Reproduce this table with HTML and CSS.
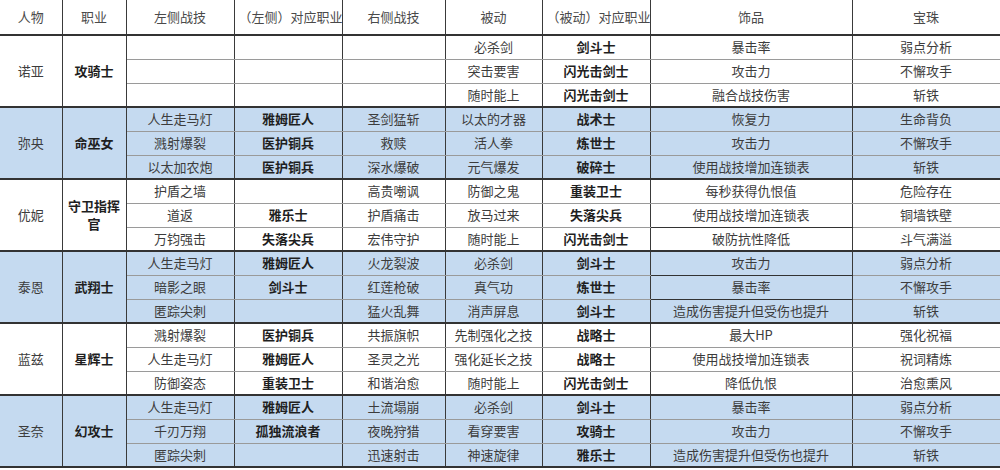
FILE: index.html
```html
<!DOCTYPE html>
<html lang="zh-CN">
<head>
<meta charset="utf-8">
<title>角色配置表</title>
<link rel="stylesheet" href="styles.css">
</head>
<body>
<table class="sheet">
  <colgroup>
    <col class="c1"><col class="c2"><col class="c3"><col class="c4"><col class="c5"><col class="c6"><col class="c7"><col class="c8"><col class="c9">
  </colgroup>
  <thead>
    <tr class="head">
      <th>人物</th><th>职业</th><th>左侧战技</th><th>（左侧）对应职业</th><th>右侧战技</th><th>被动</th><th>（被动）对应职业</th><th>饰品</th><th>宝珠</th>
    </tr>
  </thead>
  <tbody class="grp">
    <tr class="first"><td rowspan="3">诺亚</td><td rowspan="3" class="job">攻骑士</td><td></td><td class="b"></td><td></td><td>必杀剑</td><td class="b">剑斗士</td><td>暴击率</td><td>弱点分析</td></tr>
    <tr><td></td><td class="b"></td><td></td><td>突击要害</td><td class="b">闪光击剑士</td><td>攻击力</td><td>不懈攻手</td></tr>
    <tr><td></td><td class="b"></td><td></td><td>随时能上</td><td class="b">闪光击剑士</td><td>融合战技伤害</td><td>斩铁</td></tr>
  </tbody>
  <tbody class="grp blue">
    <tr class="first"><td rowspan="3">弥央</td><td rowspan="3" class="job">命巫女</td><td>人生走马灯</td><td class="b">雅姆匠人</td><td>圣剑猛斩</td><td>以太的才器</td><td class="b">战术士</td><td>恢复力</td><td>生命背负</td></tr>
    <tr><td>溅射爆裂</td><td class="b">医护铜兵</td><td>救赎</td><td>活人拳</td><td class="b">炼世士</td><td>攻击力</td><td>不懈攻手</td></tr>
    <tr><td>以太加农炮</td><td class="b">医护铜兵</td><td>深水爆破</td><td>元气爆发</td><td class="b">破碎士</td><td>使用战技增加连锁表</td><td>斩铁</td></tr>
  </tbody>
  <tbody class="grp">
    <tr class="first"><td rowspan="3">优妮</td><td rowspan="3" class="job">守卫指挥官</td><td>护盾之墙</td><td class="b"></td><td>高贵嘲讽</td><td>防御之鬼</td><td class="b">重装卫士</td><td>每秒获得仇恨值</td><td>危险存在</td></tr>
    <tr><td>道返</td><td class="b">雅乐士</td><td>护盾痛击</td><td>放马过来</td><td class="b">失落尖兵</td><td class="dk">使用战技增加连锁表</td><td>铜墙铁壁</td></tr>
    <tr><td>万钧强击</td><td class="b">失落尖兵</td><td>宏伟守护</td><td>随时能上</td><td class="b">闪光击剑士</td><td>破防抗性降低</td><td>斗气满溢</td></tr>
  </tbody>
  <tbody class="grp blue">
    <tr class="first"><td rowspan="3">泰恩</td><td rowspan="3" class="job">武翔士</td><td>人生走马灯</td><td class="b">雅姆匠人</td><td>火龙裂波</td><td>必杀剑</td><td class="b">剑斗士</td><td class="dk">攻击力</td><td>弱点分析</td></tr>
    <tr><td>暗影之眼</td><td class="b">剑斗士</td><td>红莲枪破</td><td>真气功</td><td class="b">炼世士</td><td class="dk">暴击率</td><td>不懈攻手</td></tr>
    <tr><td>匿踪尖刺</td><td class="b"></td><td>猛火乱舞</td><td>消声屏息</td><td class="b">剑斗士</td><td>造成伤害提升但受伤也提升</td><td>斩铁</td></tr>
  </tbody>
  <tbody class="grp">
    <tr class="first"><td rowspan="3">蓝兹</td><td rowspan="3" class="job">星辉士</td><td>溅射爆裂</td><td class="b">医护铜兵</td><td>共振旗帜</td><td>先制强化之技</td><td class="b">战略士</td><td>最大HP</td><td>强化祝福</td></tr>
    <tr><td>人生走马灯</td><td class="b">雅姆匠人</td><td>圣灵之光</td><td>强化延长之技</td><td class="b">战略士</td><td>使用战技增加连锁表</td><td>祝词精炼</td></tr>
    <tr><td>防御姿态</td><td class="b">重装卫士</td><td>和谐治愈</td><td>随时能上</td><td class="b">闪光击剑士</td><td>降低仇恨</td><td>治愈熏风</td></tr>
  </tbody>
  <tbody class="grp blue">
    <tr class="first"><td rowspan="3">圣奈</td><td rowspan="3" class="job">幻攻士</td><td>人生走马灯</td><td class="b">雅姆匠人</td><td>土流塌崩</td><td>必杀剑</td><td class="b">剑斗士</td><td>暴击率</td><td>弱点分析</td></tr>
    <tr><td>千刃万翔</td><td class="b">孤独流浪者</td><td>夜晚狩猎</td><td>看穿要害</td><td class="b">攻骑士</td><td>攻击力</td><td>不懈攻手</td></tr>
    <tr><td>匿踪尖刺</td><td class="b"></td><td>迅速射击</td><td>神速旋律</td><td class="b">雅乐士</td><td>造成伤害提升但受伤也提升</td><td>斩铁</td></tr>
  </tbody>
</table>
</body>
</html>
```

FILE: styles.css
```css
html, body {
  margin: 0;
  padding: 0;
  background: #ffffff;
}

.sheet {
  border-collapse: collapse;
  table-layout: fixed;
  width: 1000px;
  font-family: "Noto Sans CJK SC", "Microsoft YaHei", sans-serif;
  font-size: 13px;
  color: #3c3c3c;
}

.c1 { width: 62px; }
.c2 { width: 64px; }
.c3 { width: 108px; }
.c4 { width: 108px; }
.c5 { width: 103px; }
.c6 { width: 97px; }
.c7 { width: 108px; }
.c8 { width: 202px; }
.c9 { width: 148px; }

.sheet th,
.sheet td {
  text-align: center;
  vertical-align: middle;
  padding: 0 4px;
  line-height: 16px;
  border-left: 1px solid #3a3a3a;
  border-right: 1px solid #3a3a3a;
  border-top: 1px solid #9a9a9a;
  border-bottom: 1px solid #9a9a9a;
  white-space: nowrap;
}

.sheet th {
  font-weight: normal;
  color: #4a4a4a;
  height: 34px;
  border-top: none;
  border-bottom: 2px solid #333;
}

.sheet th:first-child,
.sheet td:first-child { border-left: none; }

.head th:last-child,
.sheet tr td:last-child { border-right: 1px solid #555; }

.sheet tbody tr { height: 24px; }

.sheet tbody.grp tr.first td {
  border-top: 2px solid #333;
}

.sheet tbody.grp:last-child tr:last-child td,
.sheet tbody.grp:last-child td[rowspan] {
  border-bottom: 2px solid #333;
}

.blue td { background: #c5daf0; }

.sheet td.job,
.sheet td.b {
  font-weight: bold;
  color: #1f1f1f;
}

.sheet td.job {
  white-space: normal;
  line-height: 18px;
  padding: 0 2px;
}

.sheet td.dk { border-bottom: 1px solid #333; }
```
